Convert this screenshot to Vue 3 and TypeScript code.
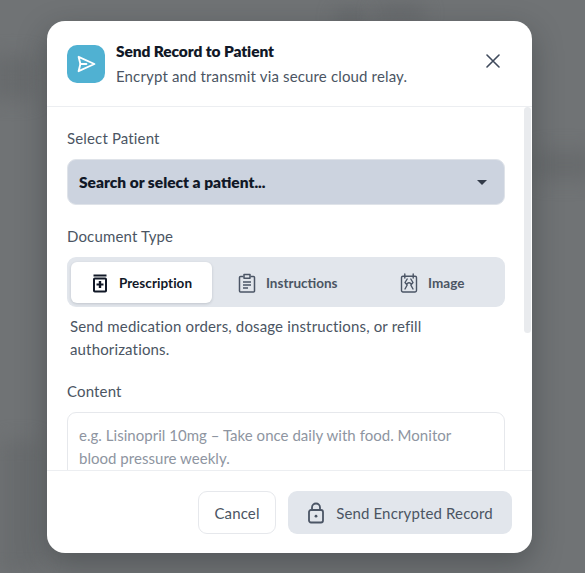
<script setup lang="ts">
const tabs = [
  { id: 'rx', label: 'Prescription' },
  { id: 'ins', label: 'Instructions' },
  { id: 'img', label: 'Image' },
]
</script>

<template>
  <div class="overlay">
    <div class="backdrop" aria-hidden="true">
      <i class="blot b1"></i><i class="blot b2"></i><i class="blot b3"></i><i class="blot b4"></i><i class="blot b5"></i>
    </div>
    <section class="modal">
      <header class="head">
        <div class="badge">
          <svg width="22" height="22" viewBox="0 0 22 22" fill="none" stroke="#fff" stroke-width="1.9" stroke-linejoin="round" stroke-linecap="round">
            <path d="M3.6 3.8 19.4 11 3.6 18.2 5.4 11Z" />
            <path d="M5.4 11h6" />
          </svg>
        </div>
        <div class="titles">
          <h2>Send Record to Patient</h2>
          <p>Encrypt and transmit via secure cloud relay.</p>
        </div>
        <svg class="close" width="14" height="14" viewBox="0 0 14 14" stroke="#3f4a5c" stroke-width="1.6" stroke-linecap="round">
          <path d="M1 1l12 12M13 1 1 13" />
        </svg>
      </header>

      <div class="scroll">
        <div class="body">
          <label class="lbl first">Select Patient</label>
          <div class="select">
            <span>Search or select a patient...</span>
            <i class="caret"></i>
          </div>

          <label class="lbl second">Document Type</label>
          <div class="tabs">
            <div v-for="(t, i) in tabs" :key="t.id" class="tab" :class="{ active: i === 0 }">
              <svg v-if="t.id === 'rx'" width="18" height="20" viewBox="0 0 18 20" fill="none">
                <path d="M2.500 1.500h13v2h-13z" fill="#111827" />
                <rect x="3" y="5.500" width="12" height="13" rx="0.800" stroke="#111827" stroke-width="2" />
                <path d="M7.800 8v2.400H5.500v2.200h2.300V15h2.400v-2.400h2.300v-2.200h-2.300V8Z" fill="#111827" />
              </svg>
              <svg v-else-if="t.id === 'ins'" width="18" height="20" viewBox="0 0 18 20" fill="none" stroke="#4b5565" stroke-width="1.500" stroke-linejoin="round">
                <path d="M5.500 3.500H2.500a1 1 0 0 0-1 1v13.500a1 1 0 0 0 1 1h13a1 1 0 0 0 1-1V4.500a1 1 0 0 0-1-1h-3" />
                <path d="M6 1.500h6v3.800H6zM5 9h8M5 12h8M5 15h5" />
              </svg>
              <svg v-else width="18" height="20" viewBox="0 0 18 20" fill="none" stroke="#4b5565" stroke-width="1.400" stroke-linecap="round" stroke-linejoin="round">
                <rect x="1.500" y="3.200" width="15" height="15.800" rx="1.400" />
                <path d="M4.800 1v4M13.200 1v4M7.200 6 5 9.500l2.200 2.500L5 16M10.800 6 13 9.500 10.800 12l2.200 4M7.200 10.500c1.200-1 2.400-1 3.600 0" />
              </svg>
              <span>{{ t.label }}</span>
            </div>
          </div>
          <p class="desc">Send medication orders, dosage instructions, or refill authorizations.</p>

          <label class="lbl third">Content</label>
          <div class="area">e.g. Lisinopril 10mg – Take once daily with food. Monitor blood pressure weekly.</div>
        </div>
        <div class="bar"></div>
      </div>

      <footer class="foot">
        <button class="btn cancel" type="button">Cancel</button>
        <button class="btn send" type="button">
          <svg width="18" height="22" viewBox="0 0 18 22" fill="none" stroke="#4b5565" stroke-width="1.800" stroke-linejoin="round">
            <rect x="2" y="8" width="14" height="12.500" rx="2" />
            <path d="M5 8V5.500a4 4 0 0 1 8 0V8" />
            <circle cx="9" cy="14.200" r="1.400" fill="#4b5565" stroke="none" />
          </svg>
          <span>Send Encrypted Record</span>
        </button>
      </footer>
    </section>
  </div>
</template>

<style scoped>
.overlay {
  position: relative;
  width: 585px;
  height: 573px;
  overflow: hidden;
  background: #707375;
  font-family: Lato, "Open Sans", sans-serif;
  display: flex;
  justify-content: flex-start;
  padding: 21px 0 20px 47px;
  box-sizing: border-box;
}
.backdrop { position: absolute; inset: 0; }
.blot { position: absolute; display: block; background: #5f6366; filter: blur(9px); border-radius: 8px; }
.b1 { left: 335px; top: 12px; width: 30px; height: 10px; }
.b2 { left: 375px; top: 6px; width: 50px; height: 14px; background: #65686b; }
.b3 { left: -10px; top: 55px; width: 45px; height: 45px; background: #686b6d; }
.b4 { left: 535px; top: 150px; width: 60px; height: 30px; background: #686b6d; }
.b5 { left: 0; top: 440px; width: 40px; height: 133px; background: #696c6e; }

.modal {
  position: relative;
  flex: none;
  width: 485px;
  height: 532px;
  background: #fff;
  border-radius: 18px;
  display: flex;
  flex-direction: column;
  overflow: hidden;
  box-shadow: 0 10px 30px rgba(30, 34, 38, 0.35);
}
.head {
  flex: none;
  height: 86px;
  box-sizing: border-box;
  padding: 0 32px 0 20px;
  display: flex;
  align-items: center;
  border-bottom: 1px solid #eceef1;
}
.badge {
  width: 38px;
  height: 38px;
  border-radius: 10px;
  background: #50b1d2;
  display: flex;
  align-items: center;
  justify-content: center;
  flex: none;
}
.titles { margin-left: 11px; flex: 1; }
h2 { margin: 0; font-size: 15.500px; font-weight: 800; color: #111827; line-height: 20px; letter-spacing: -0.1px; }
.titles p { margin: 5px 0 0; font-size: 15px; color: #4b5563; line-height: 20px; letter-spacing: 0.15px; }
.close { flex: none; margin-top: -6px; }

.scroll { flex: 1; min-height: 0; display: flex; overflow: hidden; }
.body { width: 438px; margin-left: 20px; flex: none; }
.bar { width: 7px; height: 226px; margin-left: 19px; background: #e9ebee; border-radius: 4px; flex: none; }

.lbl { display: block; font-size: 15px; line-height: 20px; color: #4b5563; letter-spacing: 0.15px; }
.first { margin-top: 21px; }
.second { margin-top: 21px; }
.third { margin-top: 20px; }

.select {
  margin-top: 11px;
  height: 46px;
  box-sizing: border-box;
  padding: 0 17px 0 11px;
  background: #ccd3df;
  border: 1px solid #dfe3e9;
  border-radius: 9px;
  display: flex;
  align-items: center;
  justify-content: space-between;
  font-size: 15.500px;
  font-weight: 800;
  color: #111827;
}
.caret { width: 0; height: 0; border-left: 5px solid transparent; border-right: 5px solid transparent; border-top: 5px solid #333b49; }

.tabs {
  margin-top: 11px;
  height: 50px;
  box-sizing: border-box;
  padding: 5px 4px 4px;
  background: #e2e6ec;
  border-radius: 9px;
  display: grid;
  grid-template-columns: 141px 1fr 1fr;
}
.tab {
  display: flex;
  align-items: center;
  justify-content: center;
  gap: 10px;
  padding-left: 7px;
  font-size: 13.500px;
  font-weight: 700;
  color: #4b5563;
  border-radius: 6px;
}
.tab.active { padding-left: 0; background: #fff; color: #111827; box-shadow: 0 1px 3px rgba(17, 24, 39, 0.16); letter-spacing: 0.05px; }

.desc { margin: 8px 4px 0 3px; font-size: 15px; line-height: 23px; color: #4b5563; letter-spacing: 0.15px; }

.area {
  margin-top: 11px;
  height: 80px;
  box-sizing: border-box;
  padding: 11px 36px 11px 11px;
  border: 1px solid #e6e8ec;
  border-radius: 9px;
  font-size: 15px;
  line-height: 23px;
  color: #8e95a1;
  letter-spacing: 0.03px;
}

.foot {
  flex: none;
  height: 83px;
  box-sizing: border-box;
  border-top: 1px solid #eceef1;
  padding: 20px 20px 0 0;
  display: flex;
  justify-content: flex-end;
  align-items: flex-start;
  gap: 12px;
}
.btn {
  font: inherit;
  height: 43px;
  box-sizing: border-box;
  border-radius: 9px;
  font-size: 15px;
  color: #4b5563;
  display: flex;
  align-items: center;
  justify-content: center;
  letter-spacing: 0.15px;
}
.cancel { width: 78px; background: #fff; border: 1px solid #e6e8ec; }
.send { width: 224px; background: #e2e6ec; border: none; gap: 11px; }
</style>

<style>
html, body { margin: 0; background: #707375; }
</style>
